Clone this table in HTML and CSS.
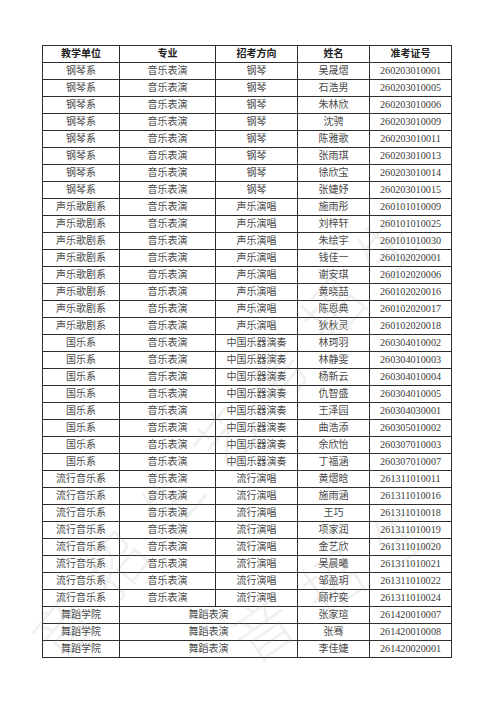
FILE: index.html
```html
<!DOCTYPE html>
<html lang="zh">
<head>
<meta charset="utf-8">
<link rel="stylesheet" href="styles.css">
</head>
<body>
<div class="page">
<table class="list">
<colgroup><col class="c1"><col class="c2"><col class="c3"><col class="c4"><col class="c5"></colgroup>
<thead>
<tr><th>教学单位</th><th>专业</th><th>招考方向</th><th>姓名</th><th>准考证号</th></tr>
</thead>
<tbody>
<tr><td>钢琴系</td><td>音乐表演</td><td>钢琴</td><td>吴晟熠</td><td class="num">260203010001</td></tr>
<tr><td>钢琴系</td><td>音乐表演</td><td>钢琴</td><td>石浩男</td><td class="num">260203010005</td></tr>
<tr><td>钢琴系</td><td>音乐表演</td><td>钢琴</td><td>朱林欣</td><td class="num">260203010006</td></tr>
<tr><td>钢琴系</td><td>音乐表演</td><td>钢琴</td><td>沈骋</td><td class="num">260203010009</td></tr>
<tr><td>钢琴系</td><td>音乐表演</td><td>钢琴</td><td>陈雅歌</td><td class="num">260203010011</td></tr>
<tr><td>钢琴系</td><td>音乐表演</td><td>钢琴</td><td>张雨琪</td><td class="num">260203010013</td></tr>
<tr><td>钢琴系</td><td>音乐表演</td><td>钢琴</td><td>徐欣宝</td><td class="num">260203010014</td></tr>
<tr><td>钢琴系</td><td>音乐表演</td><td>钢琴</td><td>张婕妤</td><td class="num">260203010015</td></tr>
<tr><td>声乐歌剧系</td><td>音乐表演</td><td>声乐演唱</td><td>施雨彤</td><td class="num">260101010009</td></tr>
<tr><td>声乐歌剧系</td><td>音乐表演</td><td>声乐演唱</td><td>刘梓轩</td><td class="num">260101010025</td></tr>
<tr><td>声乐歌剧系</td><td>音乐表演</td><td>声乐演唱</td><td>朱绘宇</td><td class="num">260101010030</td></tr>
<tr><td>声乐歌剧系</td><td>音乐表演</td><td>声乐演唱</td><td>钱佳一</td><td class="num">260102020001</td></tr>
<tr><td>声乐歌剧系</td><td>音乐表演</td><td>声乐演唱</td><td>谢安琪</td><td class="num">260102020006</td></tr>
<tr><td>声乐歌剧系</td><td>音乐表演</td><td>声乐演唱</td><td>黄晓喆</td><td class="num">260102020016</td></tr>
<tr><td>声乐歌剧系</td><td>音乐表演</td><td>声乐演唱</td><td>陈恩典</td><td class="num">260102020017</td></tr>
<tr><td>声乐歌剧系</td><td>音乐表演</td><td>声乐演唱</td><td>狄秋灵</td><td class="num">260102020018</td></tr>
<tr><td>国乐系</td><td>音乐表演</td><td>中国乐器演奏</td><td>林珂羽</td><td class="num">260304010002</td></tr>
<tr><td>国乐系</td><td>音乐表演</td><td>中国乐器演奏</td><td>林静雯</td><td class="num">260304010003</td></tr>
<tr><td>国乐系</td><td>音乐表演</td><td>中国乐器演奏</td><td>杨新云</td><td class="num">260304010004</td></tr>
<tr><td>国乐系</td><td>音乐表演</td><td>中国乐器演奏</td><td>仇智盛</td><td class="num">260304010005</td></tr>
<tr><td>国乐系</td><td>音乐表演</td><td>中国乐器演奏</td><td>王泽园</td><td class="num">260304030001</td></tr>
<tr><td>国乐系</td><td>音乐表演</td><td>中国乐器演奏</td><td>曲浩添</td><td class="num">260305010002</td></tr>
<tr><td>国乐系</td><td>音乐表演</td><td>中国乐器演奏</td><td>余欣怡</td><td class="num">260307010003</td></tr>
<tr><td>国乐系</td><td>音乐表演</td><td>中国乐器演奏</td><td>丁福涵</td><td class="num">260307010007</td></tr>
<tr><td>流行音乐系</td><td>音乐表演</td><td>流行演唱</td><td>黄熠晗</td><td class="num">261311010011</td></tr>
<tr><td>流行音乐系</td><td>音乐表演</td><td>流行演唱</td><td>施雨涵</td><td class="num">261311010016</td></tr>
<tr><td>流行音乐系</td><td>音乐表演</td><td>流行演唱</td><td>王巧</td><td class="num">261311010018</td></tr>
<tr><td>流行音乐系</td><td>音乐表演</td><td>流行演唱</td><td>项家润</td><td class="num">261311010019</td></tr>
<tr><td>流行音乐系</td><td>音乐表演</td><td>流行演唱</td><td>金艺欣</td><td class="num">261311010020</td></tr>
<tr><td>流行音乐系</td><td>音乐表演</td><td>流行演唱</td><td>吴晨曦</td><td class="num">261311010021</td></tr>
<tr><td>流行音乐系</td><td>音乐表演</td><td>流行演唱</td><td>邹盈玥</td><td class="num">261311010022</td></tr>
<tr><td>流行音乐系</td><td>音乐表演</td><td>流行演唱</td><td>顾柠奕</td><td class="num">261311010024</td></tr>
<tr><td>舞蹈学院</td><td colspan="2">舞蹈表演</td><td>张家瑄</td><td class="num">261420010007</td></tr>
<tr><td>舞蹈学院</td><td colspan="2">舞蹈表演</td><td>张骞</td><td class="num">261420010008</td></tr>
<tr><td>舞蹈学院</td><td colspan="2">舞蹈表演</td><td>李佳婕</td><td class="num">261420020001</td></tr>
</tbody>
</table>
<div class="wm wm1">音招生</div>
<div class="wm wm2">艺考招生</div>
<div class="wm wm3">音招生</div>
</div>
</body>
</html>
```

FILE: styles.css
```css
html, body {
  margin: 0;
  padding: 0;
  background: #ffffff;
}
.page {
  position: relative;
  width: 500px;
  height: 707px;
  overflow: hidden;
  padding-top: 45px;
  padding-left: 42px;
  box-sizing: border-box;
}
.list {
  border-collapse: collapse;
  table-layout: fixed;
  width: 409px;
  font-family: "Liberation Serif", "Noto Sans CJK SC", serif;
  font-size: 10px;
  color: #4a4a4a;
  border: 1.5px solid #2a2a2a;
}
.c1 { width: 77px; }
.c2 { width: 96px; }
.c3 { width: 82px; }
.c4 { width: 72px; }
.c5 { width: 82px; }
.list th, .list td {
  border: 1px solid #2e2e2e;
  padding: 0;
  height: 16px;
  line-height: 14px;
  text-align: center;
  white-space: nowrap;
  overflow: hidden;
}
.list th {
  font-weight: bold;
  color: #222222;
}
.list tr {
  height: 16.9px;
}
.num {
  font-size: 10.2px;
  color: #3a3a3a;
}
.wm {
  position: absolute;
  font-family: "Noto Sans CJK SC", sans-serif;
  font-weight: 300;
  font-size: 60px;
  line-height: 60px;
  color: rgba(150, 150, 150, 0.14);
  white-space: nowrap;
  pointer-events: none;
  transform-origin: left top;
  letter-spacing: 24px;
}
.wm1 { left: 18px; top: 630px; transform: rotate(-50deg); }
.wm2 { left: 180px; top: 440px; transform: rotate(-50deg); }
.wm3 { left: 220px; top: 620px; transform: rotate(-35deg); }
```
